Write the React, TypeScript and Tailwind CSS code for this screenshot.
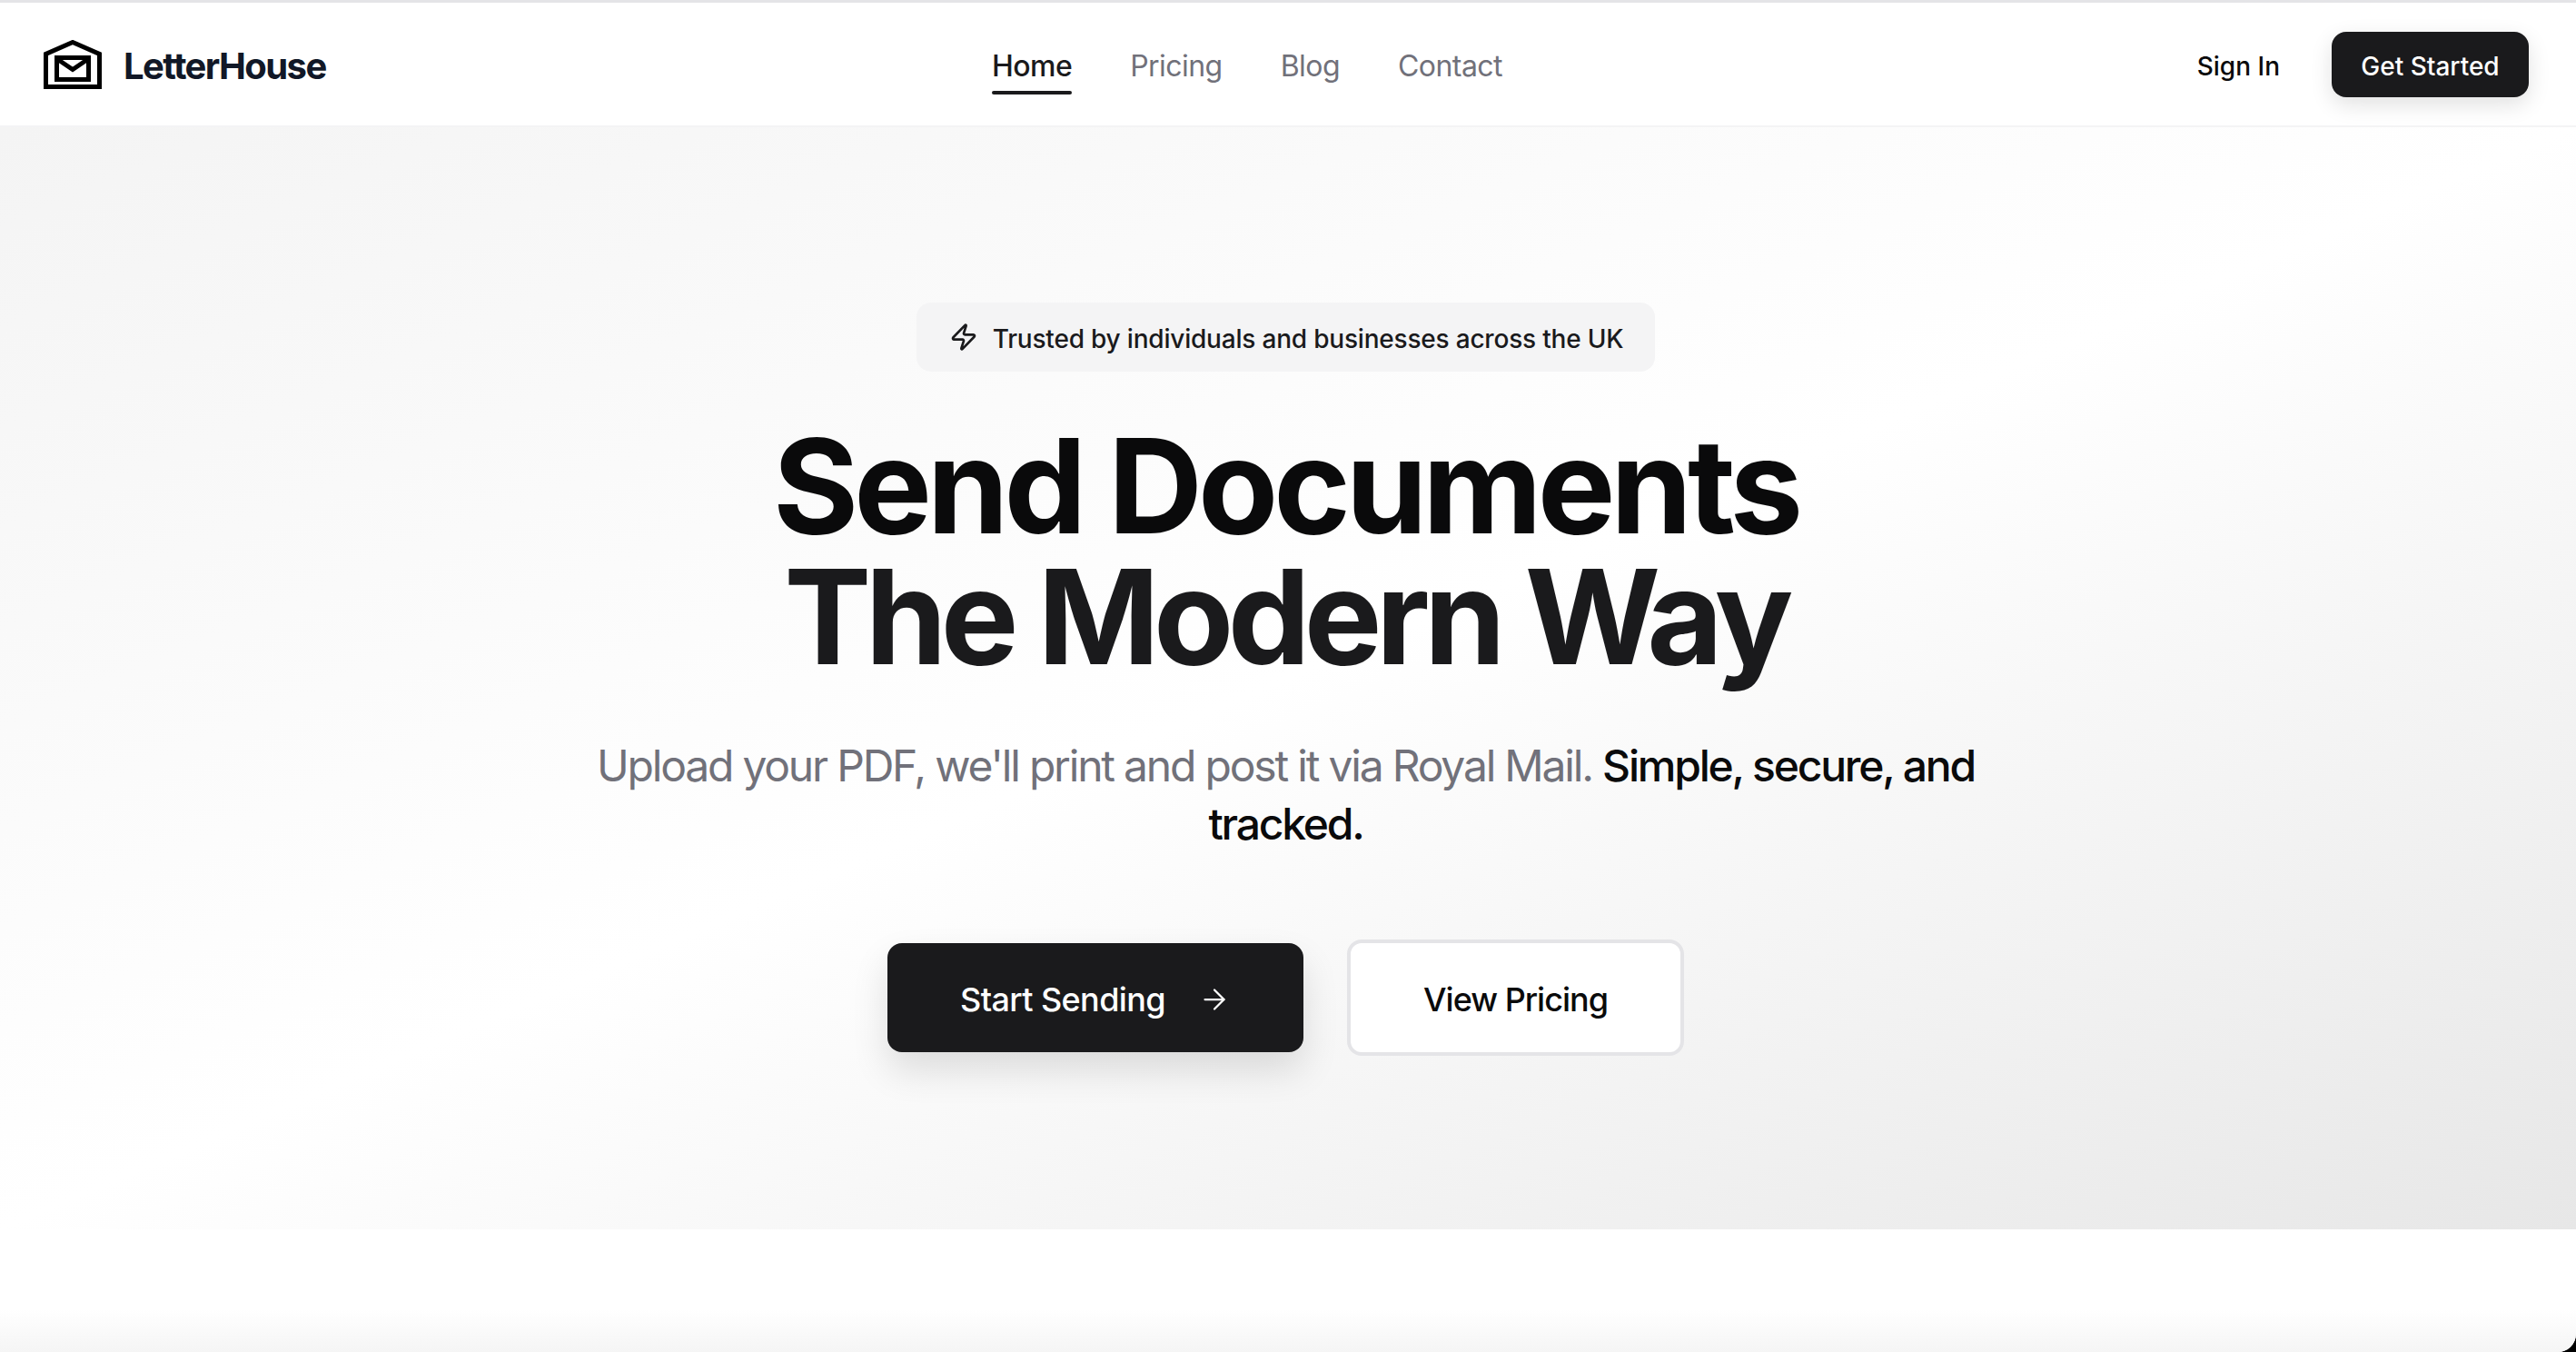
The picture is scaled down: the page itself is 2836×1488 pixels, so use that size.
import { ArrowRight, Zap } from "lucide-react";

function Logo() {
    return (
        <svg width="64" height="54" viewBox="0 0 64 54" className="shrink-0">
            <path d="M2.5 51.5V15.5L32 2.5L61.5 15.5V51.5Z" fill="none" stroke="#000" strokeWidth="5" />
            <path d="M15 21L32 32.5L49 21" fill="none" stroke="#000" strokeWidth="5" />
            <rect x="14.5" y="19.5" width="35" height="24" fill="none" stroke="#000" strokeWidth="5" />
        </svg>
    );
}

export default function App() {
    return (
        <div className="h-[1488px] bg-black font-['Inter',sans-serif] [font-optical-sizing:none]">
            <div className="h-full flex flex-col bg-white rounded-br-[20px] overflow-hidden">
                <div className="h-[3px] bg-[#e4e4e7]"></div>

                {/* Nav */}
                <nav className="h-[137px] shrink-0 pl-12 pr-[52px] flex items-center justify-between border-b-2 border-[#f4f4f5]">
                    <div className="w-[997px] flex items-center gap-6">
                        <Logo />
                        <span className="pt-1 text-[40px] font-bold tracking-[-1.6px] text-[#111827]">LetterHouse</span>
                    </div>
                    <div className="pt-1 flex items-center gap-16 text-[32px] tracking-[-0.55px]">
                        <a className="relative font-medium text-[#1a1a1c]">
                            Home
                            <span className="absolute left-0 right-0 -bottom-[7px] h-1 rounded-full bg-[#1a1a1c]"></span>
                        </a>
                        <a className="text-[#71717a]">Pricing</a>
                        <a className="text-[#71717a]">Blog</a>
                        <a className="text-[#71717a]">Contact</a>
                    </div>
                    <div className="w-[1083px] flex items-center justify-end gap-[57px] text-[28px] font-medium">
                        <a className="pt-1 text-[#0a0a0b]">Sign In</a>
                        <button className="w-[217px] h-[72px] pt-1 rounded-2xl bg-[#1a1a1c] text-white shadow-[0_8px_24px_rgba(0,0,0,0.12)]">
                            Get Started
                        </button>
                    </div>
                </nav>

                {/* Hero */}
                <section className="h-[1213px] shrink-0 pt-[193px] pr-[5px] flex flex-col items-center bg-linear-to-br from-[#f4f4f4] via-white to-[#e7e7e7]">
                    <div className="h-[76px] pl-9 pr-[35px] flex items-center gap-4 rounded-2xl bg-[#f4f4f5] text-[28px] font-medium tracking-[-0.2px] text-[#1a1a1c]">
                        <Zap size={32} strokeWidth={2} />
                        <span className="pt-1">Trusted by individuals and businesses across the UK</span>
                    </div>

                    <h1 className="mt-[54px] text-center text-[144px] leading-[144px] font-bold">
                        <span className="tracking-[-5.1px] text-[#0a0a0b]">Send Documents</span>
                        <br />
                        <span className="tracking-[-6.6px] text-[#1a1a1c]">The Modern Way</span>
                    </h1>

                    <p className="mt-[60px] w-[1536px] text-center text-[48px] leading-[64px] tracking-[-2.2px] text-[#71717a]">
                        Upload your PDF, we'll print and post it via Royal Mail.{" "}
                        <span className="font-medium text-[#0a0a0b]">Simple, secure, and tracked.</span>
                    </p>

                    <div className="mt-[95px] flex items-center gap-12 text-[36px] font-medium">
                        <button className="h-[120px] px-20 pt-1 flex items-center gap-9 rounded-2xl bg-[#1a1a1c] tracking-[-0.6px] text-white shadow-[0_20px_40px_rgba(0,0,0,0.12)]">
                            Start Sending
                            <ArrowRight size={36} strokeWidth={1.5} />
                        </button>
                        <button className="h-[128px] px-20 pt-1 rounded-2xl bg-white border-4 border-[#e4e4e7] tracking-[-1px] text-[#0a0a0b]">
                            View Pricing
                        </button>
                    </div>
                </section>

                {/* Bottom strip */}
                <div className="flex-1 bg-linear-to-b from-white from-[65%] to-[#f5f5f5]"></div>
            </div>
        </div>
    );
}
